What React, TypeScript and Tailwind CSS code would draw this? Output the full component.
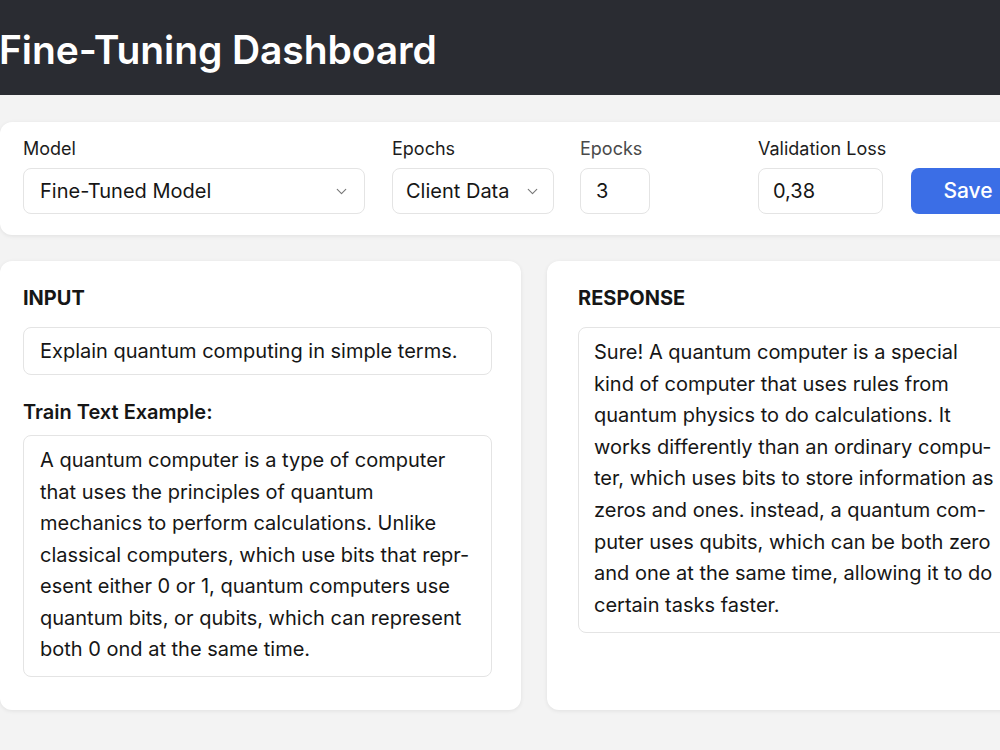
import { ChevronDown } from 'lucide-react'

const trainLines = [
  'A quantum computer is a type of computer',
  'that uses the principles of quantum',
  'mechanics to perform calculations. Unlike',
  'classical computers, which use bits that repr-',
  'esent either 0 or 1, quantum computers use',
  'quantum bits, or qubits, which can represent',
  'both 0 ond at the same time.',
]

const responseLines = [
  'Sure! A quantum computer is a special',
  'kind of computer that uses rules from',
  'quantum physics to do calculations. It',
  'works differently than an ordinary compu-',
  'ter, which uses bits to store information as',
  'zeros and ones. instead, a quantum com-',
  'puter uses qubits, which can be both zero',
  'and one at the same time, allowing it to do',
  'certain tasks faster.',
]

function Field({ label, className, children, muted }: { label: string; className: string; children: React.ReactNode; muted?: boolean }) {
  return (
    <div className={`flex flex-col ${className}`}>
      <span className={`whitespace-nowrap text-[18px] leading-[24px] mb-[7px] ${muted ? 'text-[#4a4a4a]' : 'text-[#1c1c1c]'}`}>{label}</span>
      {children}
    </div>
  )
}

export default function App() {
  return (
    <div className="w-[1000px] h-[750px] overflow-hidden bg-[#f3f3f3] font-['Inter','Liberation_Sans',sans-serif] text-[#161616]">
      <header className="h-[95px] bg-[#2a2c32] flex items-center">
        <h1 className="text-white text-[39px] font-semibold tracking-[-0.1px] leading-none -ml-[1px] pt-[4px] whitespace-nowrap">
          Fine-Tuning Dashboard
        </h1>
      </header>

      <div className="w-[1100px] pt-[27px]">
        {/* settings bar */}
        <div className="bg-white rounded-[12px] shadow-[0_1px_4px_rgba(0,0,0,0.08)] pl-[23px] pt-[15px] pb-[21px] flex items-end">
          <Field label="Model" className="w-[342px]">
            <div className="h-[46px] border border-[#e4e4e4] rounded-[8px] flex items-center justify-between pl-[16px] pr-[14px] text-[20px]">
              <span>Fine-Tuned Model</span>
              <ChevronDown className="w-[17px] h-[17px] text-[#777]" strokeWidth={1.6} />
            </div>
          </Field>
          <Field label="Epochs" className="w-[162px] ml-[27px]">
            <div className="h-[46px] border border-[#e4e4e4] rounded-[8px] flex items-center justify-between pl-[13px] pr-[12px] text-[20px]">
              <span>Client Data</span>
              <ChevronDown className="w-[17px] h-[17px] text-[#777]" strokeWidth={1.6} />
            </div>
          </Field>
          <Field label="Epocks" muted className="w-[70px] ml-[26px]">
            <div className="h-[46px] border border-[#e4e4e4] rounded-[8px] flex items-center pl-[15px] text-[20px]">3</div>
          </Field>
          <Field label="Validation Loss" className="w-[125px] ml-[108px]">
            <div className="h-[46px] border border-[#e4e4e4] rounded-[8px] flex items-center pl-[14px] text-[20px]">0,38</div>
          </Field>
          <button className="ml-[28px] w-[114px] h-[46px] rounded-[8px] bg-[#3b6ee6] text-white text-[21px] font-medium">
            Save
          </button>
        </div>

        {/* panels */}
        <div className="flex gap-[26px] mt-[26px]">
          <div className="w-[521px] bg-white rounded-[12px] shadow-[0_1px_4px_rgba(0,0,0,0.08)] pl-[23px] pr-[29px] pt-[24px] pb-[33px]">
            <h2 className="text-[20px] font-bold leading-[26px]">INPUT</h2>
            <div className="mt-[16px] h-[48px] border border-[#e4e4e4] rounded-[8px] flex items-center pl-[16px] text-[20px]">
              Explain quantum computing in simple terms.
            </div>
            <h3 className="mt-[24px] text-[20px] font-semibold leading-[26px]">Train Text Example:</h3>
            <div className="mt-[10px] border border-[#e4e4e4] rounded-[8px] pl-[16px] pt-[9px] pb-[10px] text-[20px] leading-[31.5px]">
              {trainLines.map((l) => (
                <div key={l} className="whitespace-nowrap">{l}</div>
              ))}
            </div>
          </div>

          <div className="w-[521px] bg-white rounded-[12px] shadow-[0_1px_4px_rgba(0,0,0,0.08)] pl-[31px] pr-[29px] pt-[24px] pb-[33px]">
            <h2 className="text-[20px] font-bold leading-[26px]">RESPONSE</h2>
            <div className="mt-[16px] border border-[#e4e4e4] rounded-[8px] pl-[15px] pt-[9px] pb-[11px] text-[20px] leading-[31.6px]">
              {responseLines.map((l) => (
                <div key={l} className="whitespace-nowrap">{l}</div>
              ))}
            </div>
          </div>
        </div>
      </div>
    </div>
  )
}
